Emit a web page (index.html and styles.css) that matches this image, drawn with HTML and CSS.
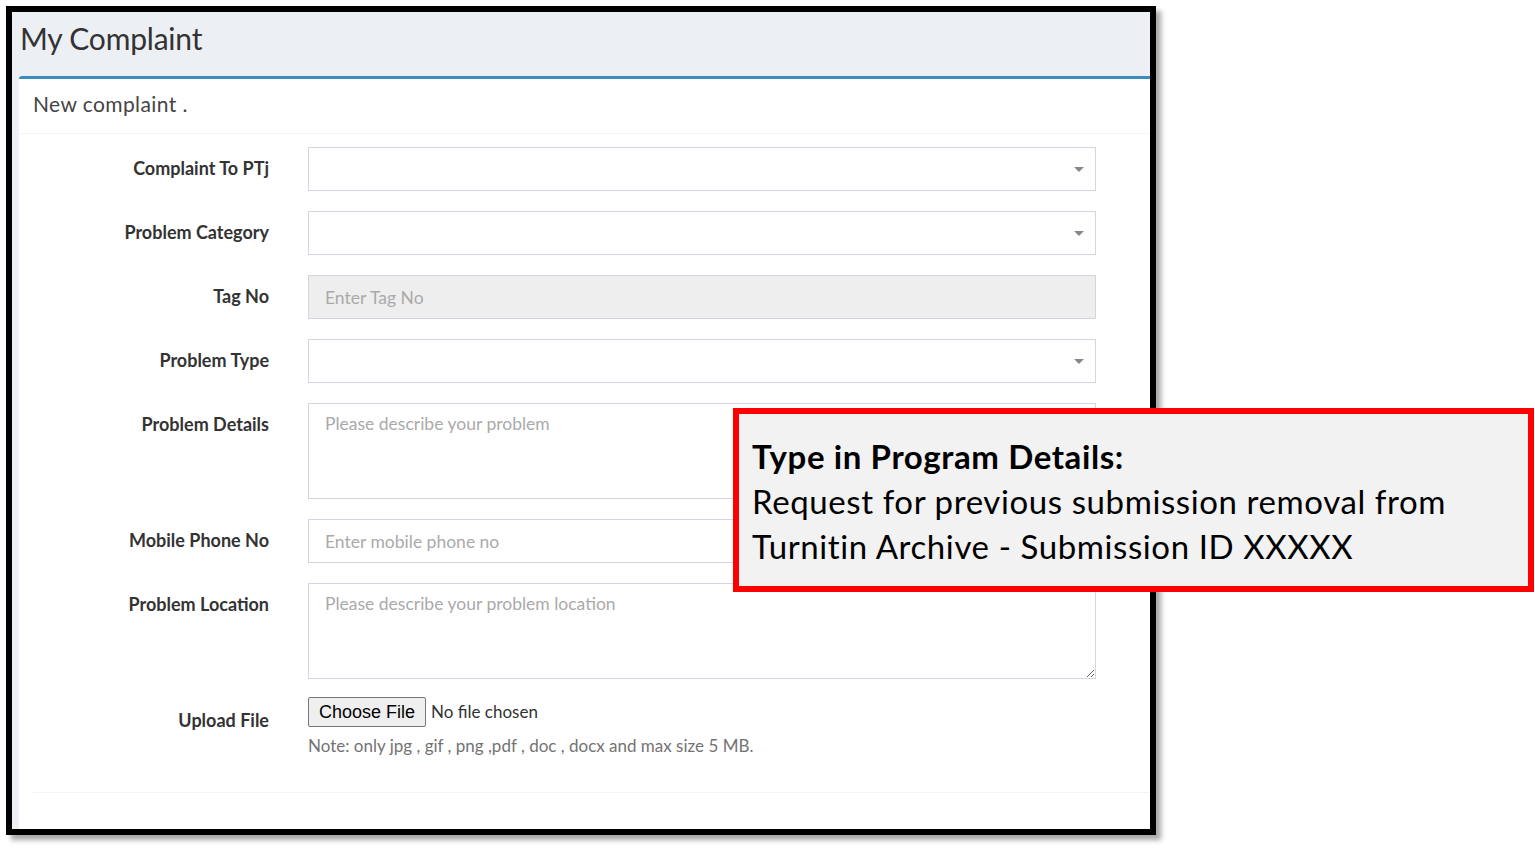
FILE: index.html
```html
<!DOCTYPE html>
<html lang="en">
<head>
    <meta charset="UTF-8">
    <title>My Complaint</title>
    <link rel="stylesheet" href="styles.css">
</head>
<body>
    <!-- screenshot frame -->
    <div class="frame">
        <div class="content-header">
            <h1>My Complaint</h1>
        </div>

        <div class="content">
            <div class="box">
                <div class="box-header">New complaint .</div>

                <form class="box-body">
                    <label class="control-label">Complaint To PTj</label>
                    <div class="fake-select"><span class="caret"></span></div>

                    <label class="control-label">Problem Category</label>
                    <div class="fake-select"><span class="caret"></span></div>

                    <label class="control-label">Tag No</label>
                    <input type="text" class="form-control" placeholder="Enter Tag No" disabled>

                    <label class="control-label">Problem Type</label>
                    <div class="fake-select"><span class="caret"></span></div>

                    <label class="control-label">Problem Details</label>
                    <textarea class="form-control area" placeholder="Please describe your problem"></textarea>

                    <label class="control-label">Mobile Phone No</label>
                    <input type="text" class="form-control" placeholder="Enter mobile phone no">

                    <label class="control-label">Problem Location</label>
                    <textarea class="form-control area" placeholder="Please describe your problem location"></textarea>

                    <label class="control-label">Upload File</label>
                    <div class="upload">
                        <input type="file" class="file-input">
                        <p class="help-block">Note: only jpg , gif , png ,pdf , doc , docx and max size 5 MB.</p>
                    </div>
                </form>

                <div class="box-footer"></div>
            </div>
        </div>
    </div>

    <!-- callout -->
    <div class="callout">
        <b>Type in Program Details:</b><br>
        Request for previous submission removal from<br>
        Turnitin Archive - Submission ID XXXXX
    </div>
</body>
</html>
```

FILE: styles.css
```css
body {
    margin: 0;
    background: #ffffff;
    font-family: 'Lato', 'Open Sans', sans-serif;
    color: #333;
    position: relative;
    height: 849px;
    overflow: hidden;
}

/* frame */
.frame {
    margin: 6px 0 0 6px;
    width: 1138px;
    height: 817px;
    border: 6px solid #000;
    box-shadow: 5px 5px 5px rgba(0, 0, 0, 0.35);
    background: #ecf0f5;
    overflow: hidden;
}

.content-header {
    height: 64px;
    padding: 0 8px;
}

.content-header h1 {
    margin: 0;
    padding-top: 7px;
    font-size: 30px;
    font-weight: 400;
    line-height: 38px;
    color: #333;
    letter-spacing: -0.2px;
}

.content {
    padding-left: 7px;
}

.box {
    background: #fff;
    border-top: 3px solid #3c8dbc;
    border-top-left-radius: 3px;
    height: 760px;
}

.box-header {
    height: 54px;
    line-height: 50px;
    padding: 0 14px;
    font-size: 21px;
    letter-spacing: 0.4px;
    color: #444;
    border-bottom: 1px solid #f4f4f4;
}

/* form */
.box-body {
    display: grid;
    grid-template-columns: 236px 788px;
    column-gap: 39px;
    row-gap: 20px;
    padding: 13px 14px 0 14px;
}

.control-label {
    text-align: right;
    font-weight: 700;
    font-size: 18px;
    line-height: 43px;
    color: #333;
}

.form-control,
.fake-select {
    box-sizing: border-box;
    height: 44px;
    width: 788px;
    border: 1px solid #d2d6de;
    background: #fff;
    font-family: 'Lato', sans-serif;
    font-size: 17.5px;
    padding: 0 16px;
    color: #555;
    margin: 0;
}

.form-control::placeholder {
    color: #aaa;
}

.form-control:disabled {
    background: #eee;
}

.fake-select {
    display: flex;
    align-items: center;
    justify-content: flex-end;
    padding-right: 11px;
}

.caret {
    width: 0;
    height: 0;
    border-left: 5px solid transparent;
    border-right: 5px solid transparent;
    border-top: 5px solid #888;
}

.area {
    height: 96px;
    padding-top: 9px;
    resize: vertical;
    line-height: 22px;
}

.upload {
    margin-top: -2px;
}

.file-input {
    font-family: 'Lato', sans-serif;
    font-size: 17px;
    color: #333;
}

.file-input::file-selector-button {
    font-family: 'Liberation Sans', Arial, sans-serif;
    font-size: 18px;
    height: 30px;
    padding: 0 10px;
    margin-right: 5px;
    background: #efefef;
    border: 1px solid #767676;
    border-radius: 2px;
    color: #000;
}

.help-block {
    margin: 8px 0 0 0;
    font-size: 17px;
    color: #737373;
}

.box-footer {
    margin: 36px 0 0 14px;
    border-top: 1px solid #f4f4f4;
}

/* callout */
.callout {
    position: absolute;
    left: 733px;
    top: 408px;
    width: 763px;
    height: 152px;
    border: 6px solid #ff0000;
    background: #f2f2f2;
    padding: 20px 13px 0 13px;
    box-sizing: content-box;
    font-family: 'Lato', sans-serif;
    font-size: 33px;
    letter-spacing: 0.6px;
    line-height: 45px;
    color: #000;
}
```
